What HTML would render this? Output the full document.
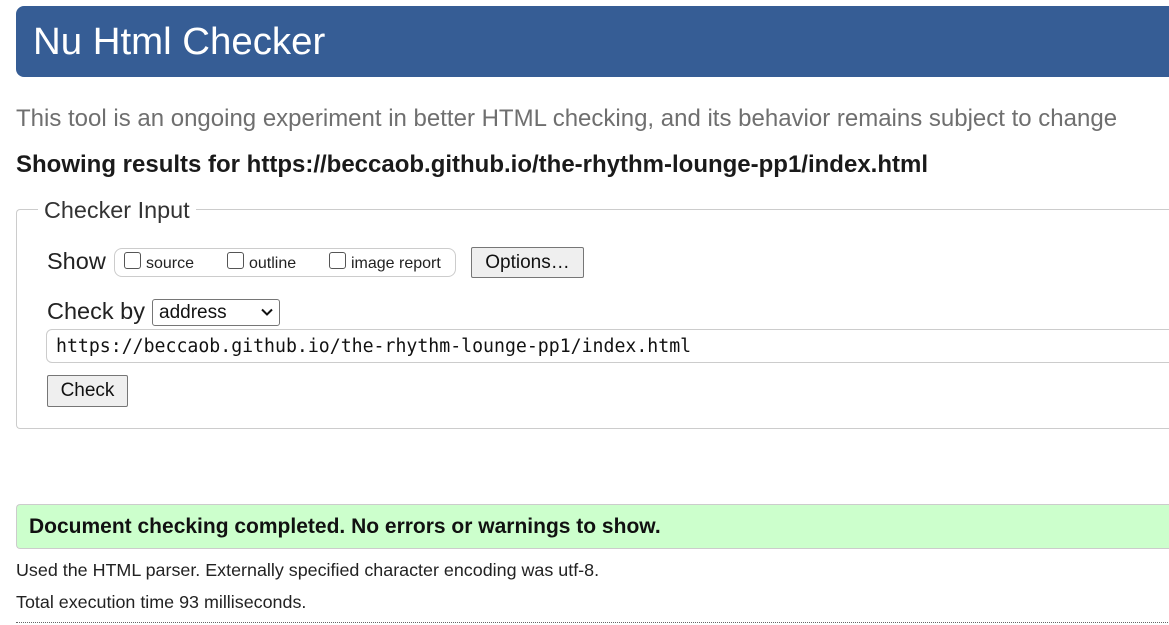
<!DOCTYPE html>
<html><head><meta charset="utf-8"><style>
body{margin:0;width:1169px;height:625px;overflow:hidden;background:#fff;font-family:"Liberation Sans",Arial,sans-serif;position:relative;color:#222}
.a{position:absolute;white-space:nowrap}
.hdr{left:16px;top:6px;width:1160px;height:71px;background:#365d95;border-radius:8px 0 0 8px}
.hdr span{position:absolute;left:17px;top:14px;font-size:38.4px;color:#fff}
.cb{display:inline-block;width:15px;height:15px;border:1px solid #555;border-radius:3px;vertical-align:-1px;margin-right:5px;background:#fff}
.btn{position:absolute;background:#efefef;border:1px solid #767676;border-radius:2px;font-size:19px;color:#111}
</style></head><body>
<div class="a hdr"><span>Nu Html Checker</span></div>
<div class="a" style="left:16px;top:105px;font-size:24px;color:#6f6f6f">This tool is an ongoing experiment in better HTML checking, and its behavior remains subject to change</div>
<div class="a" style="left:16px;top:151px;font-size:24px;font-weight:bold;color:#1a1a1a">Showing results for https://beccaob.github.io/the-rhythm-lounge-pp1/index.html</div>
<div class="a" style="left:16px;top:209px;width:1160px;height:218px;border:1px solid #ccc;border-right:none;border-radius:4px 0 0 4px"></div>
<div class="a" style="left:38px;top:197px;padding:0 6px;background:#fff;font-size:23.4px;color:#333">Checker Input</div>
<div class="a" style="left:47px;top:248px;font-size:23.5px;color:#222">Show</div>
<div class="a" style="left:114px;top:248px;width:340px;height:27px;border:1px solid #ccc;border-radius:8px"></div>
<div class="a" style="left:124px;top:252px;font-size:16px;color:#222"><span class="cb"></span>source</div>
<div class="a" style="left:227px;top:252px;font-size:16px;color:#222"><span class="cb"></span>outline</div>
<div class="a" style="left:329px;top:252px;font-size:16px;color:#222"><span class="cb"></span>image report</div>
<div class="btn" style="left:471px;top:247px;width:111px;height:29px;line-height:29px;text-align:center">Options…</div>
<div class="a" style="left:47px;top:298px;font-size:23.5px;color:#222">Check by</div>
<div class="a" style="left:152px;top:299px;width:126px;height:25px;border:1px solid #767676;border-radius:3px;font-size:19px;line-height:25px;color:#111"><span style="margin-left:6px">address</span>
<svg style="position:absolute;right:6px;top:8px" width="12" height="9" viewBox="0 0 12 9"><path d="M1 1.5l5 5 5-5" fill="none" stroke="#111" stroke-width="2"/></svg></div>
<div class="a" style="left:46px;top:329px;width:1130px;height:32px;border:1px solid #ccc;border-radius:6px"></div>
<div class="a" style="left:56px;top:336px;font-family:'DejaVu Sans Mono','Liberation Mono',monospace;font-size:18.2px;color:#111">https://beccaob.github.io/the-rhythm-lounge-pp1/index.html</div>
<div class="btn" style="left:47px;top:375px;width:79px;height:30px;line-height:30px;text-align:center">Check</div>
<div class="a" style="left:16px;top:504px;width:1160px;height:43px;background:#ccffcc;border:1px solid #ccc;border-right:none;border-radius:4px 0 0 4px"></div>
<div class="a" style="left:29px;top:515px;font-size:21px;font-weight:bold;color:#111">Document checking completed. No errors or warnings to show.</div>
<div class="a" style="left:16px;top:560px;font-size:17.9px;color:#222">Used the HTML parser. Externally specified character encoding was utf-8.</div>
<div class="a" style="left:16px;top:592px;font-size:17.9px;color:#222">Total execution time 93 milliseconds.</div>
<div class="a" style="left:16px;top:622px;width:1160px;border-top:1px dotted #666"></div>
</body></html>
